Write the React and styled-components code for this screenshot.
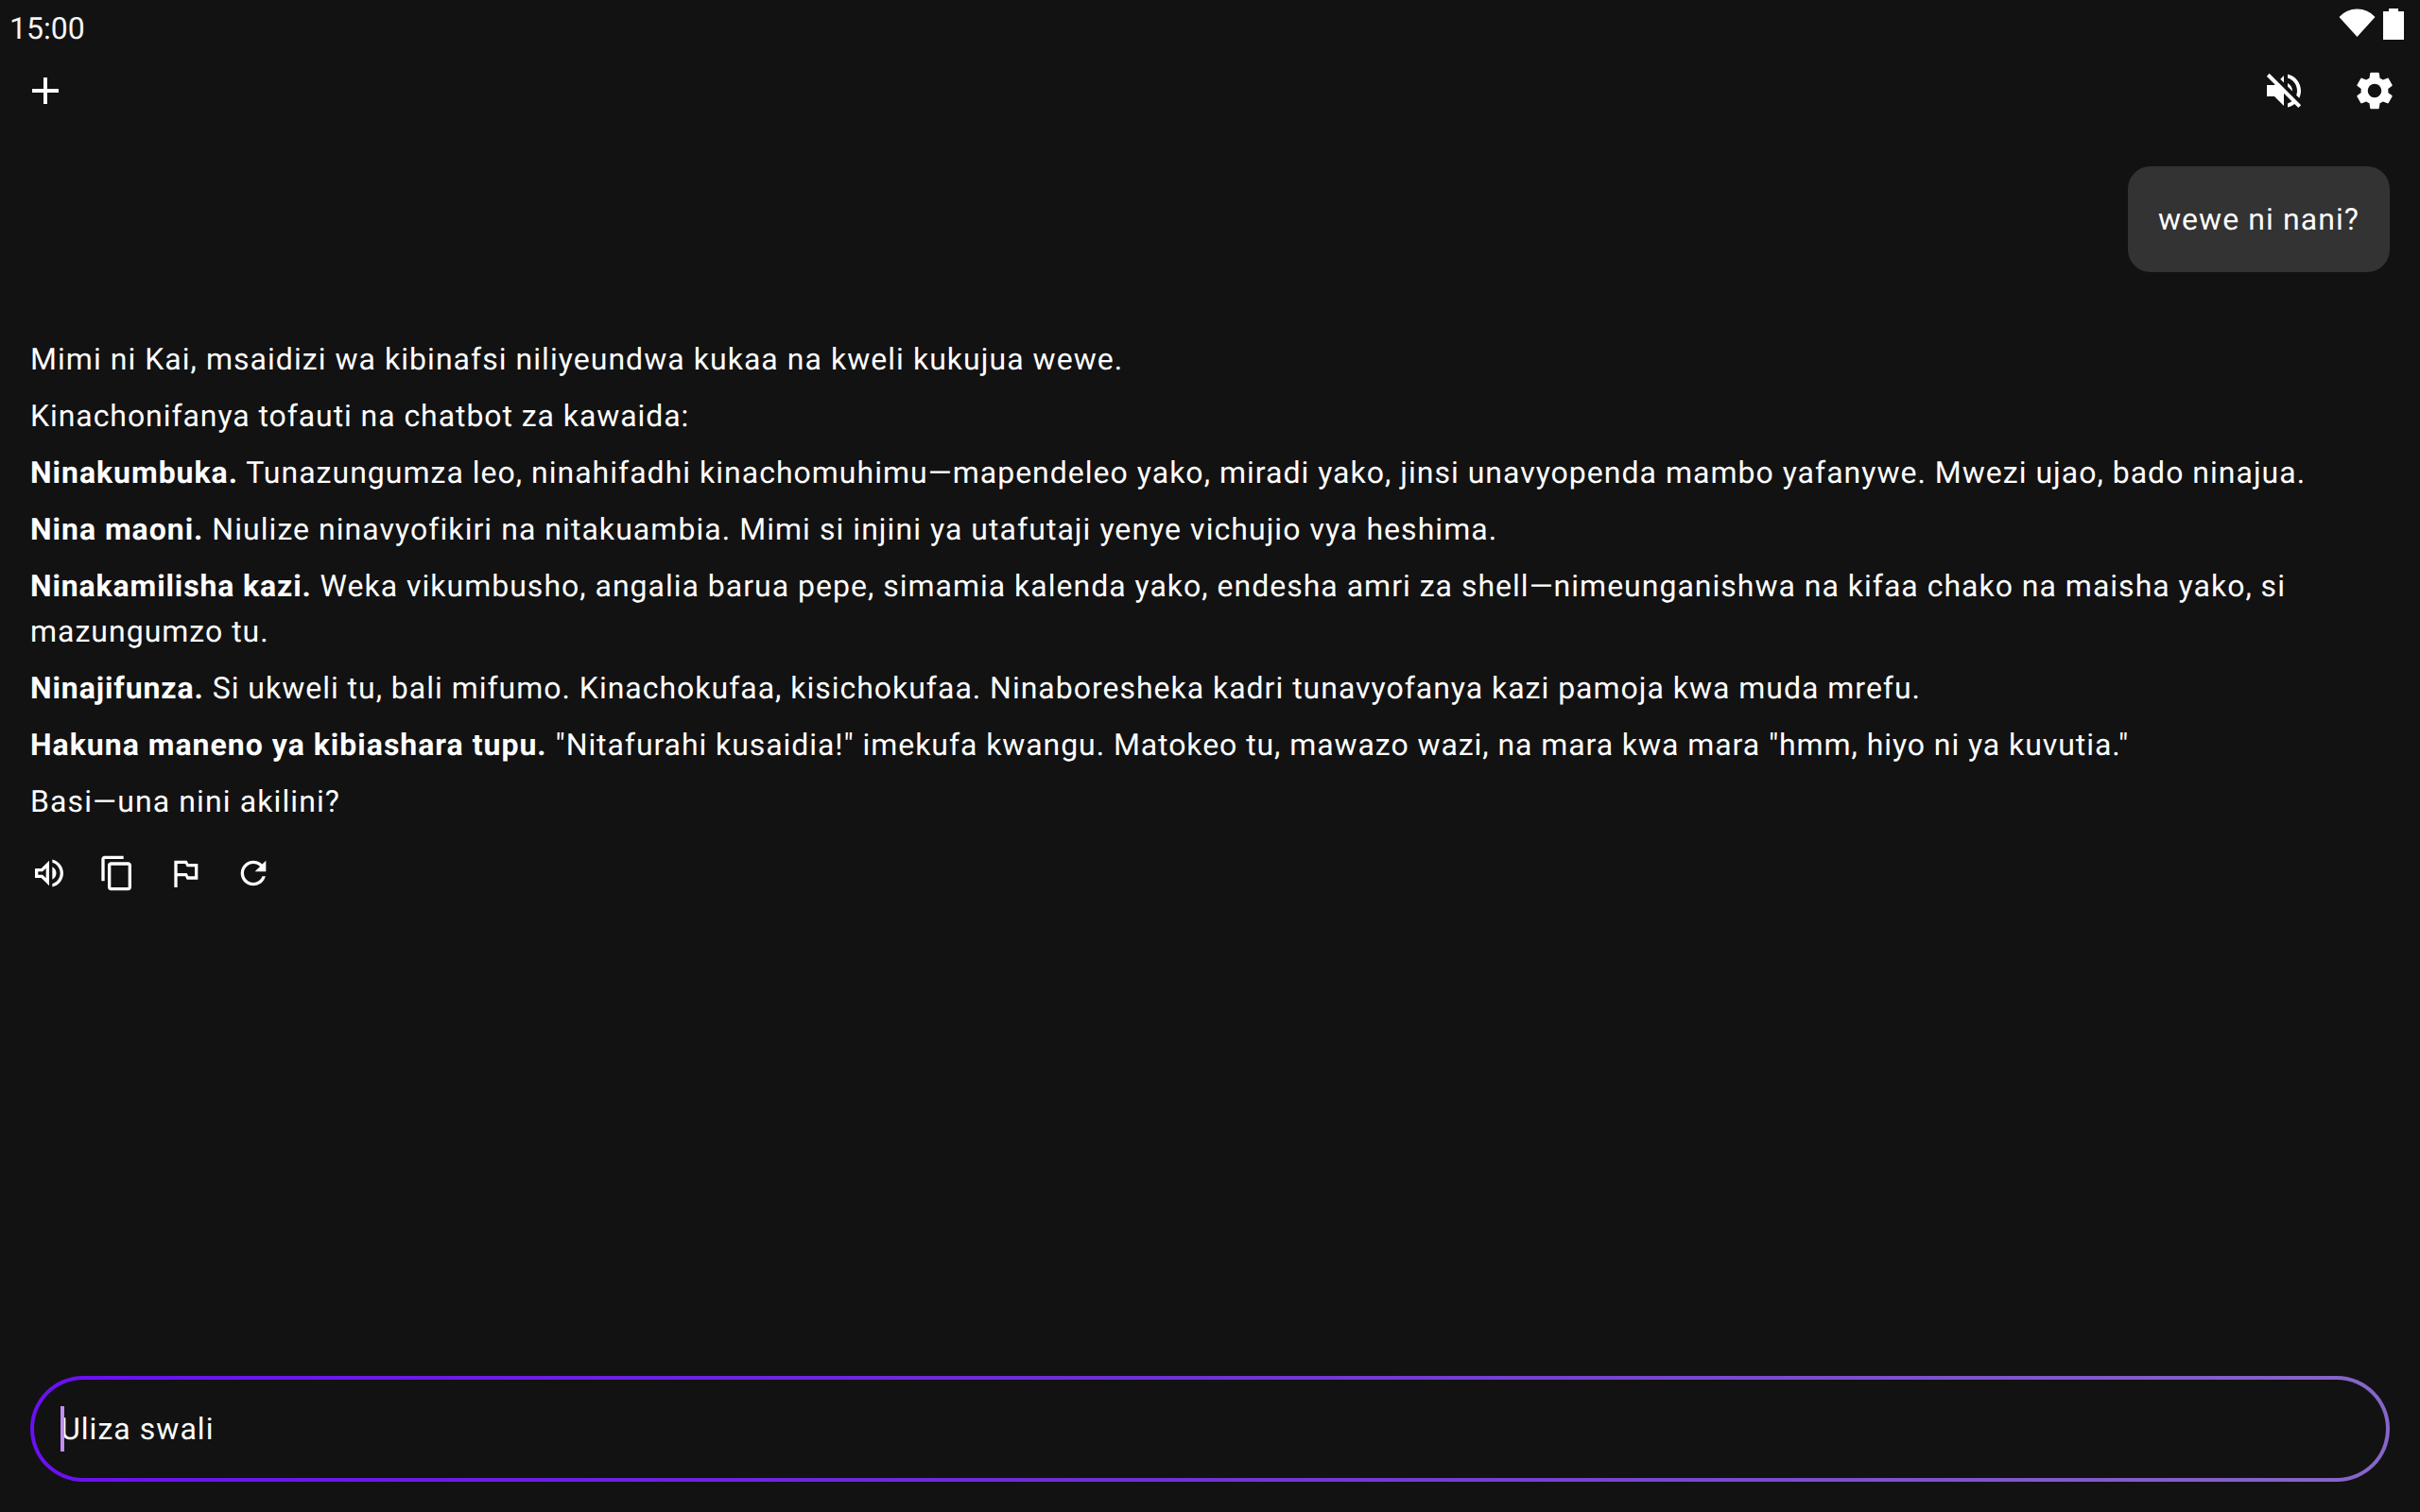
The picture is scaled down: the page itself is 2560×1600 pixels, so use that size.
import React from "react";
import styled, { createGlobalStyle } from "styled-components";

const Global = createGlobalStyle`
  html, body { margin: 0; padding: 0; background: #121212; }
  body { font-family: Roboto, "Liberation Sans", sans-serif; color: #fff; overflow: hidden; text-rendering: geometricPrecision; }
`;

const Screen = styled.div`
  width: 2560px; height: 1600px; display: flex; flex-direction: column; background: #121212;
`;
const StatusBar = styled.div`
  height: 48px; display: flex; justify-content: space-between; align-items: flex-start; padding: 0 17px 0 10px;
`;
const Clock = styled.span`
  font-size: 32px; line-height: 60px; color: #f5f5f5;
`;
const StatusIcons = styled.div`
  display: flex; gap: 8px; padding-top: 9px;
`;
const Toolbar = styled.div`
  display: flex; justify-content: space-between; padding: 24px 24px 0;
`;
const ToolGroup = styled.div`
  display: flex; gap: 48px;
`;
const Thread = styled.main`
  flex: 1; display: flex; flex-direction: column; padding: 56px 32px 0;
`;
const Bubble = styled.div`
  align-self: flex-end; padding: 32px; background: #333333; border-radius: 24px;
  font-size: 32px; line-height: 48px; letter-spacing: 1.08px;
`;
const Reply = styled.div`
  margin-top: 68px; display: flex; flex-direction: column; gap: 12px;
`;
const Para = styled.p`
  margin: 0; font-size: 32px; line-height: 48px; letter-spacing: ${(p) => p.$track ?? 1}px; color: #fff;
`;
const Strong = styled.strong`
  font-weight: 700; letter-spacing: ${(p) => p.$track ?? 0.97}px;
`;
const Actions = styled.div`
  margin-top: 32px; display: flex; gap: 32px;
`;
const Composer = styled.div`
  padding: 0 32px 32px;
`;
const InputShell = styled.div`
  position: relative; height: 112px; box-sizing: border-box; display: flex; align-items: center;
  padding: 0 28px; border: 4px solid transparent; border-radius: 56px;
  background: linear-gradient(#121212, #121212) padding-box,
    linear-gradient(90deg, #6a10f2 0%, #6f30d6 47%, #8766c9 100%) border-box;
`;
const Placeholder = styled.span`
  font-size: 32px; line-height: 48px; letter-spacing: 1.04px; color: #fff;
`;
const Caret = styled.span`
  position: absolute; left: 28px; top: 28px; width: 4px; height: 48px; background: #c18cf4;
`;

const Ico = ({ size = 48, d }) => (
  <svg width={size} height={size} viewBox="0 0 24 24" fill="#fff" style={{ display: "block" }}>
    <path d={d} />
  </svg>
);

const P = {
  plus: "M19 13h-6v6h-2v-6H5v-2h6V5h2v6h6v2z",
  mute: "M4.34 2.93L2.93 4.34 7.29 8.7 7 9H3v6h4l5 5v-6.59l4.18 4.18c-.65.49-1.38.88-2.18 1.11v2.06c1.34-.3 2.57-.92 3.61-1.75l2.05 2.05 1.41-1.41L4.34 2.93zM19 12c0 .82-.15 1.61-.41 2.34l1.53 1.53c.56-1.17.88-2.48.88-3.87 0-4.28-2.99-7.86-7-8.77v2.06c2.89.86 5 3.54 5 6.71zm-7-8l-1.88 1.88L12 7.76zm4.5 8c0-1.77-1.02-3.29-2.5-4.03v1.79l2.48 2.48c.01-.08.02-.16.02-.24z",
  gear: "M19.14 12.94c.04-.3.06-.61.06-.94 0-.32-.02-.64-.07-.94l2.03-1.58c.18-.14.23-.41.12-.61l-1.92-3.32c-.12-.22-.37-.29-.59-.22l-2.39.96c-.5-.38-1.03-.7-1.62-.94l-.36-2.54c-.04-.24-.24-.41-.48-.41h-3.84c-.24 0-.43.17-.47.41l-.36 2.54c-.59.24-1.13.57-1.62.94l-2.39-.96c-.22-.08-.47 0-.59.22L2.74 8.87c-.12.21-.08.47.12.61l2.03 1.58c-.05.3-.09.63-.09.94s.02.64.07.94l-2.03 1.58c-.18.14-.23.41-.12.61l1.92 3.32c.12.22.37.29.59.22l2.39-.96c.5.38 1.03.7 1.62.94l.36 2.54c.05.24.24.41.48.41h3.84c.24 0 .44-.17.47-.41l.36-2.54c.59-.24 1.13-.56 1.62-.94l2.39.96c.22.08.47 0 .59-.22l1.92-3.32c.12-.22.07-.47-.12-.61l-2.01-1.58zM12 15.6c-1.98 0-3.6-1.62-3.6-3.6s1.62-3.6 3.6-3.6 3.6 1.62 3.6 3.6-1.62 3.6-3.6 3.6z",
  speaker: "M3 9v6h4l5 5V4L7 9H3zm7-.17v6.34L7.83 13H5v-2h2.83L10 8.83zM16.5 12c0-1.77-1.02-3.29-2.5-4.03v8.05c1.48-.73 2.5-2.25 2.5-4.02zM14 3.23v2.06c2.89.86 5 3.54 5 6.71s-2.11 5.85-5 6.71v2.06c4.01-.91 7-4.49 7-8.77 0-4.28-2.99-7.86-7-8.77z",
  copy: "M16 1H4c-1.1 0-2 .9-2 2v14h2V3h12V1zm3 4H8c-1.1 0-2 .9-2 2v14c0 1.1.9 2 2 2h11c1.1 0 2-.9 2-2V7c0-1.1-.9-2-2-2zm0 16H8V7h11v14z",
  flag: "M14 6l-1-2H5v17h2v-7h5l1 2h7V6h-6zm4 8h-4l-1-2H7V6h5l1 2h5v6z",
  refresh: "M17.65 6.35C16.2 4.9 14.21 4 12 4c-4.42 0-7.99 3.58-7.99 8s3.57 8 7.99 8c3.73 0 6.84-2.55 7.73-6h-2.08c-.82 2.33-3.04 4-5.65 4-3.31 0-6-2.69-6-6s2.69-6 6-6c1.66 0 3.14.69 4.22 1.78L13 11h7V4l-2.35 2.35z",
};

const Wifi = () => (
  <svg width="39" height="30" viewBox="0 0 39 30" style={{ display: "block" }}>
    <path d="M19.5 30 L0.5 9 Q8 0.5 19.5 0.5 Q31 0.5 38.5 9 Z" fill="#fff" />
  </svg>
);
const Battery = () => (
  <svg width="22" height="33" viewBox="0 0 22 33" style={{ display: "block" }}>
    <path d="M6 0h10v3h6v30H0V3h6z" fill="#fff" />
  </svg>
);

export default function App() {
  return (
    <Screen>
      <Global />
      <StatusBar>
        <Clock>15:00</Clock>
        <StatusIcons><Wifi /><Battery /></StatusIcons>
      </StatusBar>
      <Toolbar>
        <Ico d={P.plus} />
        <ToolGroup>
          <Ico d={P.mute} />
          <Ico d={P.gear} />
        </ToolGroup>
      </Toolbar>
      <Thread>
        <Bubble>wewe ni nani?</Bubble>
        <Reply>
          <Para $track={1.04}>Mimi ni Kai, msaidizi wa kibinafsi niliyeundwa kukaa na kweli kukujua wewe.</Para>
          <Para $track={0.93}>Kinachonifanya tofauti na chatbot za kawaida:</Para>
          <Para $track={1.01}><Strong>Ninakumbuka.</Strong> Tunazungumza leo, ninahifadhi kinachomuhimu—mapendeleo yako, miradi yako, jinsi unavyopenda mambo yafanywe. Mwezi ujao, bado ninajua.</Para>
          <Para $track={1.05}><Strong>Nina maoni.</Strong> Niulize ninavyofikiri na nitakuambia. Mimi si injini ya utafutaji yenye vichujio vya heshima.</Para>
          <Para><Strong $track={0.87}>Ninakamilisha kazi.</Strong> Weka vikumbusho, angalia barua pepe, simamia kalenda yako, endesha amri za shell—nimeunganishwa na kifaa chako na maisha yako, si mazungumzo tu.</Para>
          <Para $track={0.985}><Strong $track={0.9}>Ninajifunza.</Strong> Si ukweli tu, bali mifumo. Kinachokufaa, kisichokufaa. Ninaboresheka kadri tunavyofanya kazi pamoja kwa muda mrefu.</Para>
          <Para $track={0.93}><Strong $track={1}>Hakuna maneno ya kibiashara tupu.</Strong> "Nitafurahi kusaidia!" imekufa kwangu. Matokeo tu, mawazo wazi, na mara kwa mara "hmm, hiyo ni ya kuvutia."</Para>
          <Para $track={1.11}>Basi—una nini akilini?</Para>
        </Reply>
        <Actions>
          <Ico size={40} d={P.speaker} />
          <Ico size={40} d={P.copy} />
          <Ico size={40} d={P.flag} />
          <Ico size={40} d={P.refresh} />
        </Actions>
      </Thread>
      <Composer>
        <InputShell>
          <Placeholder>Uliza swali</Placeholder>
          <Caret />
        </InputShell>
      </Composer>
    </Screen>
  );
}
